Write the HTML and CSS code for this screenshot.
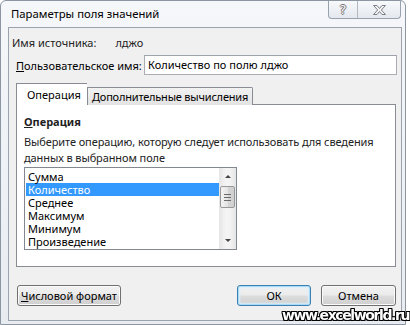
FILE: index.html
```html
<!DOCTYPE html>
<html>
  <head>
    <title>Параметры поля значений</title>
    <link rel="stylesheet" href="styles.css">
  </head>
  <body>
    <div class="window">
      <div class="titlebar">
        <span class="title">Параметры поля значений</span>
        <div class="caption-btns">
          <span class="cap-btn help">?</span>
          <span class="cap-btn close">
            <svg width="15" height="12" viewBox="0 0 15 12">
              <path d="M1.5 1.5h3.5l2.5 3l2.5-3h3.5l-4.2 4.5l4.2 4.5h-3.5l-2.5-3l-2.5 3h-3.5l4.2-4.5z" fill="#f4f4f4" stroke="#7a7f86" stroke-width="1"/>
            </svg>
          </span>
        </div>
      </div>

      <div class="client">
        <div class="source-row">
          <span>Имя источника:</span>
          <span class="source-val">лджо</span>
        </div>

        <div class="name-row">
          <label><u>П</u>ользовательское имя:</label>
          <div class="textbox">Количество по полю лджо</div>
        </div>

        <div class="tabs">
          <div class="tab active">Операция</div>
          <div class="tab">Дополнительные вычисления</div>
        </div>

        <div class="panel">
          <div class="panel-title"><u>О</u>перация</div>
          <div class="panel-desc">Выберите операцию, которую следует использовать для сведения<br>данных в выбранном поле</div>

          <div class="listbox">
            <ul class="items">
              <li>Сумма</li>
              <li class="selected">Количество</li>
              <li>Среднее</li>
              <li>Максимум</li>
              <li>Минимум</li>
              <li>Произведение</li>
            </ul>
            <div class="scrollbar">
              <div class="arrow up"></div>
              <div class="track">
                <div class="thumb"><span></span><span></span><span></span></div>
              </div>
              <div class="arrow down"></div>
            </div>
          </div>
        </div>

        <div class="buttons">
          <button class="btn btn-format"><u>Ч</u>исловой формат</button>
          <button class="btn btn-ok">ОК</button>
          <button class="btn btn-cancel">Отмена</button>
        </div>
      </div>
    </div>

    <div class="watermark">www.excelworld.ru</div>
  </body>
</html>
```

FILE: styles.css
```css
body{
  margin: 0;
  background: #fff;
  font-family: "Segoe UI", "Noto Sans", sans-serif;
  font-size: 11px;
  color: #000;
  white-space: nowrap;
}

/**** окно ****/
.window{
  box-sizing: border-box;
  width: 406px;
  height: 325px;
  padding: 0 3px 3px 7px;
  border: 1px solid #8c96a2;
  border-radius: 6px 6px 0 0;
  background: linear-gradient(#f5f7fa, #e8ecf1);
  display: flex;
  flex-direction: column;
  overflow: hidden;
}

.titlebar{
  height: 26px;
  display: flex;
  align-items: flex-start;
}
.title{
  margin: 5px 0 0 3px;
  line-height: 16px;
  font-size: 11.3px;
  color: #000;
}
.caption-btns{
  margin-left: auto;
  margin-right: 1px;
  display: flex;
  height: 17px;
  border: 1px solid #98a1ad;
  border-top: none;
  border-radius: 0 0 4px 4px;
  background: linear-gradient(#f7f9fb, #e4e9ef);
  overflow: hidden;
}
.cap-btn{
  display: flex;
  align-items: center;
  justify-content: center;
}
.cap-btn.help{
  width: 28px;
  border-right: 1px solid #b2b9c3;
  font-family: "DejaVu Sans", sans-serif;
  font-size: 13px;
  color: #f5f5f5;
  text-shadow: 1px 0 0 #777, -1px 0 0 #777, 0 1px 0 #777, 0 -1px 0 #777;
}
.cap-btn.close{
  width: 42px;
}

/**** клиентская область ****/
.client{
  flex: 1;
  display: flex;
  flex-direction: column;
  border: 1px solid #9ba4ae;
  background: #f0f0f0;
}

.source-row{
  margin: 7px 0 0 3px;
  line-height: 16px;
  display: flex;
  color: #222;
}
.source-val{
  margin-left: 19px;
}

.name-row{
  margin-top: 4px;
  padding: 0 4px 0 7px;
  display: flex;
  align-items: center;
  height: 20px;
}
.textbox{
  margin-left: auto;
  box-sizing: border-box;
  width: 253px;
  height: 20px;
  padding: 0 3px;
  line-height: 18px;
  border: 1px solid #abadb3;
  border-top-color: #9ea2aa;
  background: #fff;
}

/**** вкладки ****/
.tabs{
  margin-top: 9px;
  padding-left: 7px;
  display: flex;
  align-items: flex-end;
  height: 21px;
  position: relative;
  z-index: 1;
  margin-bottom: -1px;
}
.tab{
  box-sizing: border-box;
  height: 18px;
  padding: 0 4px;
  line-height: 17px;
  letter-spacing: -0.2px;
  border: 1px solid #898c95;
  border-bottom: none;
  background: linear-gradient(#f2f2f2, #e3e3e3);
}
.tab.active{
  width: 71px;
  height: 22px;
  padding: 0 10px;
  line-height: 21px;
  letter-spacing: 0;
  border-right: none;
  background: #fff;
}
.tab + .tab{
  border-radius: 0 2px 0 0;
}

.panel{
  box-sizing: border-box;
  margin-left: 7px;
  width: 380px;
  height: 163px;
  border: 1px solid #898c95;
  background: #fff;
  display: flex;
  flex-direction: column;
  padding-left: 7px;
}
.panel-title{
  margin-top: 9px;
  line-height: 16px;
  font-weight: bold;
  color: #1e1e1e;
}
.panel-desc{
  margin-top: 4px;
  line-height: 16px;
  letter-spacing: -0.1px;
  color: #222;
}

/**** список ****/
.listbox{
  margin-top: 1px;
  box-sizing: border-box;
  width: 213px;
  height: 83px;
  border: 1px solid #828790;
  display: flex;
  background: #fff;
}
.items{
  list-style: none;
  margin: 0;
  padding: 2px 0 0 1px;
  flex: 1;
}
.items li{
  height: 13px;
  line-height: 13px;
  padding-left: 2px;
}
.items li.selected{
  background: #3399ff;
  color: #fff;
}
.scrollbar{
  width: 17px;
  display: flex;
  flex-direction: column;
  background: linear-gradient(90deg, #e6e6e6, #f4f4f4 40%, #f4f4f4 60%, #e6e6e6);
}
.arrow{
  height: 17px;
  display: flex;
  align-items: center;
  justify-content: center;
}
.arrow::before{
  content: "";
  border-left: 3px solid transparent;
  border-right: 3px solid transparent;
}
.arrow.up::before{
  border-bottom: 3px solid #444;
}
.arrow.down::before{
  border-top: 3px solid #444;
}
.track{
  flex: 1;
}
.thumb{
  box-sizing: border-box;
  margin: 1px 0 0 1px;
  width: 15px;
  height: 22px;
  border: 1px solid #989898;
  border-radius: 2px;
  background: linear-gradient(90deg, #f3f3f3, #e4e4e4 50%, #d6d6d6 51%, #d0d0d0);
  display: flex;
  flex-direction: column;
  align-items: center;
  justify-content: center;
  gap: 2px;
}
.thumb span{
  width: 7px;
  height: 1px;
  background: #6a6a6a;
}

/**** кнопки ****/
.buttons{
  margin-top: 18px;
  padding: 0 5px 0 8px;
  display: flex;
  gap: 10px;
}
.btn{
  box-sizing: border-box;
  height: 21px;
  padding: 0;
  font-family: inherit;
  font-size: 11px;
  color: #000;
  border: 1px solid #707070;
  border-radius: 3px;
  background: linear-gradient(#f2f2f2 0%, #ebebeb 48%, #dddddd 52%, #cfcfcf 100%);
  box-shadow: inset 0 0 0 1px #fbfbfb;
}
.btn-format{
  width: 104px;
}
.btn-ok{
  margin-left: auto;
  width: 74px;
  border-color: #3c7fb1;
  box-shadow: inset 0 0 0 1px #a9dbf6, inset 0 0 2px 2px #d8eefa;
}
.btn-cancel{
  width: 75px;
}

/**** водяной знак ****/
.watermark{
  position: fixed;
  right: 1px;
  bottom: 2px;
  font-family: "DejaVu Sans", sans-serif;
  font-weight: bold;
  font-size: 14px;
  letter-spacing: -1.4px;
  color: #fff;
  text-shadow: 1px 0 0 #000, -1px 0 0 #000, 0 1px 0 #000, 0 -1px 0 #000,
    1px 1px 0 #000, -1px -1px 0 #000, 1px -1px 0 #000, -1px 1px 0 #000;
}
```
